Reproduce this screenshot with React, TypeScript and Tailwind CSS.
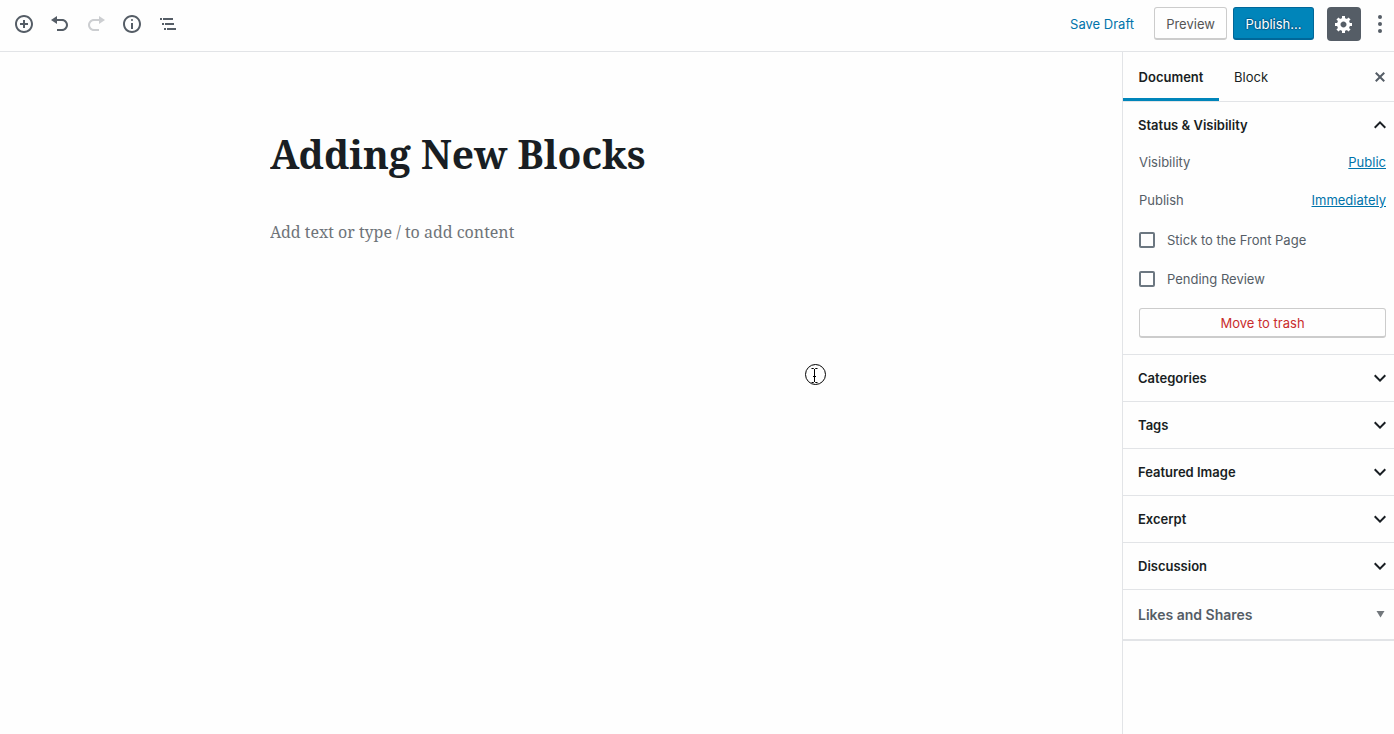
import { ReactNode, useState } from "react";

const ICONS = {
  insert:
    "M10 1c-5 0-9 4-9 9s4 9 9 9 9-4 9-9-4-9-9-9zm0 16c-3.9 0-7-3.1-7-7s3.1-7 7-7 7 3.1 7 7-3.1 7-7 7zm1-11H9v3H6v2h3v3h2v-3h3V9h-3V6z",
  undo: "M12 5H7V2L1 6l6 4V7h5c2.2 0 4 1.8 4 4s-1.8 4-4 4H7v2h5c3.3 0 6-2.7 6-6s-2.7-6-6-6z",
  redo: "M8 5h5V2l6 4-6 4V7H8c-2.2 0-4 1.8-4 4s1.8 4 4 4h5v2H8c-3.3 0-6-2.7-6-6s2.7-6 6-6z",
  info: "M9 15h2V9H9v6zm1-10c-.5 0-1 .5-1 1s.5 1 1 1 1-.5 1-1-.5-1-1-1zm0-4c-5 0-9 4-9 9s4 9 9 9 9-4 9-9-4-9-9-9zm0 16c-3.9 0-7-3.1-7-7s3.1-7 7-7 7 3.1 7 7-3.1 7-7 7z",
  outline: "M2 4h2v2H2zM5 4h10v2H5zM4 9h2v2H4zM7 9h9v2H7zM6 14h2v2H6zM9 14h9v2H9z",
  gear: "M18 12h-2.18c-.17.7-.44 1.35-.81 1.93l1.54 1.54-2.1 2.1-1.54-1.54c-.58.36-1.23.63-1.91.79V19H8v-2.18c-.68-.16-1.33-.43-1.91-.79l-1.54 1.54-2.12-2.12 1.54-1.54c-.36-.58-.63-1.23-.79-1.91H1V9.03h2.17c.16-.7.44-1.35.8-1.94L2.43 5.55l2.1-2.1 1.54 1.54c.58-.37 1.24-.64 1.93-.81V2h3v2.18c.68.16 1.33.43 1.91.79l1.54-1.54 2.12 2.12-1.54 1.54c.36.59.64 1.24.8 1.94H18V12zm-8.5 1.5c1.66 0 3-1.34 3-3s-1.34-3-3-3-3 1.34-3 3 1.34 3 3 3z",
  close:
    "M14.95 6.46L11.41 10l3.54 3.54-1.41 1.41L10 11.42l-3.53 3.53-1.42-1.42L8.58 10 5.05 6.47l1.42-1.42L10 8.58l3.54-3.53z",
  down: "M7.41 8.59L12 13.17l4.59-4.58L18 10l-6 6-6-6 1.41-1.41z",
  up: "M12 8l-6 6 1.41 1.41L12 10.83l4.59 4.58L18 14z",
};

interface IconProps {
  name: keyof typeof ICONS;
  size?: number;
}

function Icon({ name, size = 20 }: IconProps) {
  return (
    <svg width={size} height={size} viewBox={`0 0 ${size} ${size}`} fill="currentColor" aria-hidden="true">
      <path d={ICONS[name]} />
    </svg>
  );
}

interface ToolButtonProps {
  label: string;
  disabled?: boolean;
  children: ReactNode;
}

function ToolButton({ label, disabled, children }: ToolButtonProps) {
  return (
    <button
      type="button"
      aria-label={label}
      disabled={disabled}
      className="flex size-9 items-center justify-center text-[#555d66] disabled:text-[#ccced1]"
    >
      {children}
    </button>
  );
}

function Header() {
  return (
    <header className="flex h-[52px] shrink-0 items-center justify-between border-b border-[#e2e4e7] pb-1 pl-1.5">
      <div className="flex">
        <ToolButton label="Add block">
          <Icon name="insert" />
        </ToolButton>
        <ToolButton label="Undo">
          <Icon name="undo" />
        </ToolButton>
        <ToolButton label="Redo" disabled>
          <Icon name="redo" />
        </ToolButton>
        <ToolButton label="Content structure">
          <Icon name="info" />
        </ToolButton>
        <ToolButton label="Block navigation">
          <Icon name="outline" />
        </ToolButton>
      </div>
      <div className="flex items-center text-[13px] leading-5">
        <button type="button" className="mr-5 text-[#0073aa]">
          Save Draft
        </button>
        <button
          type="button"
          className="mr-1.5 h-[33px] w-[73px] rounded-[3px] border border-b-2 border-[#ccc] pt-px text-[#555]"
        >
          Preview
        </button>
        <button
          type="button"
          className="mr-[13px] h-[33px] w-[81px] rounded-[3px] border border-b-2 border-[#006799] bg-[#0085ba] pt-px text-white [text-shadow:0_-1px_1px_#005d8c,1px_0_1px_#005d8c,0_1px_1px_#005d8c,-1px_0_1px_#005d8c]"
        >
          Publish…
        </button>
        <button
          type="button"
          aria-label="Settings"
          className="mr-2 flex size-[34px] items-center justify-center rounded-[4px] bg-[#555d66] text-white"
        >
          <Icon name="gear" />
        </button>
        <button type="button" aria-label="More options" className="flex h-9 w-[25px] items-center pl-0.5 text-[#555d66]">
          <svg width="18" height="20" viewBox="0 0 18 20" fill="currentColor" aria-hidden="true">
            <circle cx="9" cy="3" r="2" />
            <circle cx="9" cy="10" r="2" />
            <circle cx="9" cy="17" r="2" />
          </svg>
        </button>
      </div>
    </header>
  );
}

function Checkbox({ label }: { label: string }) {
  return (
    <label className="flex items-center gap-3">
      <input type="checkbox" className="size-4 appearance-none rounded-[2px] border-2 border-[#6c7781] checked:bg-[#11a0d2]" />
      {label}
    </label>
  );
}

function Sidebar() {
  const [statusOpen, setStatusOpen] = useState(true);

  return (
    <aside className="w-[272px] shrink-0 border-l border-[#e2e4e7] text-[13px] leading-5 text-[#555d66]">
      {/* Tabs */}
      <div className="flex h-[50px] items-stretch border-b border-[#e2e4e7] text-[#191e23]">
        <button type="button" className="w-24 border-b-3 border-[#0085ba] pt-[3px] font-semibold">
          Document
        </button>
        <button type="button" className="px-[15px]">
          Block
        </button>
        <button type="button" aria-label="Close settings" className="mr-1 ml-auto text-[#555d66]">
          <Icon name="close" />
        </button>
      </div>

      {/* Status & Visibility */}
      <section className="border-b border-[#e2e4e7]">
        <button
          type="button"
          aria-expanded={statusOpen}
          onClick={() => setStatusOpen(!statusOpen)}
          className="flex h-[46px] w-full items-center justify-between pr-0.5 pl-[15px] font-semibold text-[#191e23]"
        >
          Status &amp; Visibility
          <Icon name={statusOpen ? "up" : "down"} size={24} />
        </button>
        {statusOpen && (
          <div className="flex flex-col pr-2 pb-4 pl-4">
            <div className="mt-1 flex justify-between">
              <span>Visibility</span>
              <a href="#visibility" className="text-[#0073aa] underline">
                Public
              </a>
            </div>
            <div className="mt-[18px] mb-5 flex justify-between">
              <span>Publish</span>
              <a href="#publish" className="text-[#0073aa] underline">
                Immediately
              </a>
            </div>
            <div className="flex flex-col gap-[19px]">
              <Checkbox label="Stick to the Front Page" />
              <Checkbox label="Pending Review" />
            </div>
            <button
              type="button"
              className="mt-[19px] h-[30px] rounded-[3px] border border-b-2 border-[#ccc] pt-px text-[#c92c2c]"
            >
              Move to trash
            </button>
          </div>
        )}
      </section>

      {["Categories", "Tags", "Featured Image", "Excerpt", "Discussion"].map((title) => (
        <button
          key={title}
          type="button"
          className="flex h-[47px] w-full items-center justify-between border-b border-[#e2e4e7] pr-0.5 pl-[15px] font-semibold text-[#191e23]"
        >
          {title}
          <Icon name="down" size={24} />
        </button>
      ))}

      <button
        type="button"
        className="flex h-[51px] w-full items-center justify-between border-b-2 border-[#e2e4e7] pr-[9px] pl-[15px] text-sm font-semibold"
      >
        Likes and Shares
        <svg width="9" height="8" viewBox="0 0 9 8" fill="#72777c" aria-hidden="true">
          <path d="M0.500 0h8L4.500 6.500z" />
        </svg>
      </button>
    </aside>
  );
}

function Pointer() {
  return (
    <svg
      width="22"
      height="22"
      viewBox="0 0 22 22"
      fill="none"
      stroke="#000"
      aria-hidden="true"
      className="pointer-events-none absolute top-[364px] left-[804px]"
    >
      <circle cx="11.500" cy="10.500" r="10" fill="#fff" />
      <path d="M7.500 4.500h2l1 1 1-1h2M7.500 18.500h2l1-1 1 1h2M10.500 5v13M9 12.500h3" />
    </svg>
  );
}

export default function App() {
  const [title, setTitle] = useState("Adding New Blocks");

  return (
    <div className="relative flex min-h-screen flex-col bg-[#fefefe] font-['Inter','Liberation_Sans',sans-serif]">
      <Header />
      <div className="flex flex-1">
        <main className="min-w-0 flex-1 font-['Noto_Serif','DejaVu_Serif',serif]">
          <div className="mx-auto max-w-[582px] pt-[73px]">
            <input
              aria-label="Post title"
              value={title}
              onChange={(e) => setTitle(e.target.value)}
              className="block h-[58px] w-full text-[39px] font-bold text-[#191e23] outline-none"
            />
            <input
              aria-label="Add block content"
              placeholder="Add text or type / to add content"
              className="mt-[33px] block h-8 w-full text-base text-[#191e23] outline-none placeholder:text-[#6f7479]"
            />
          </div>
        </main>
        <Sidebar />
      </div>
      <Pointer />
    </div>
  );
}
